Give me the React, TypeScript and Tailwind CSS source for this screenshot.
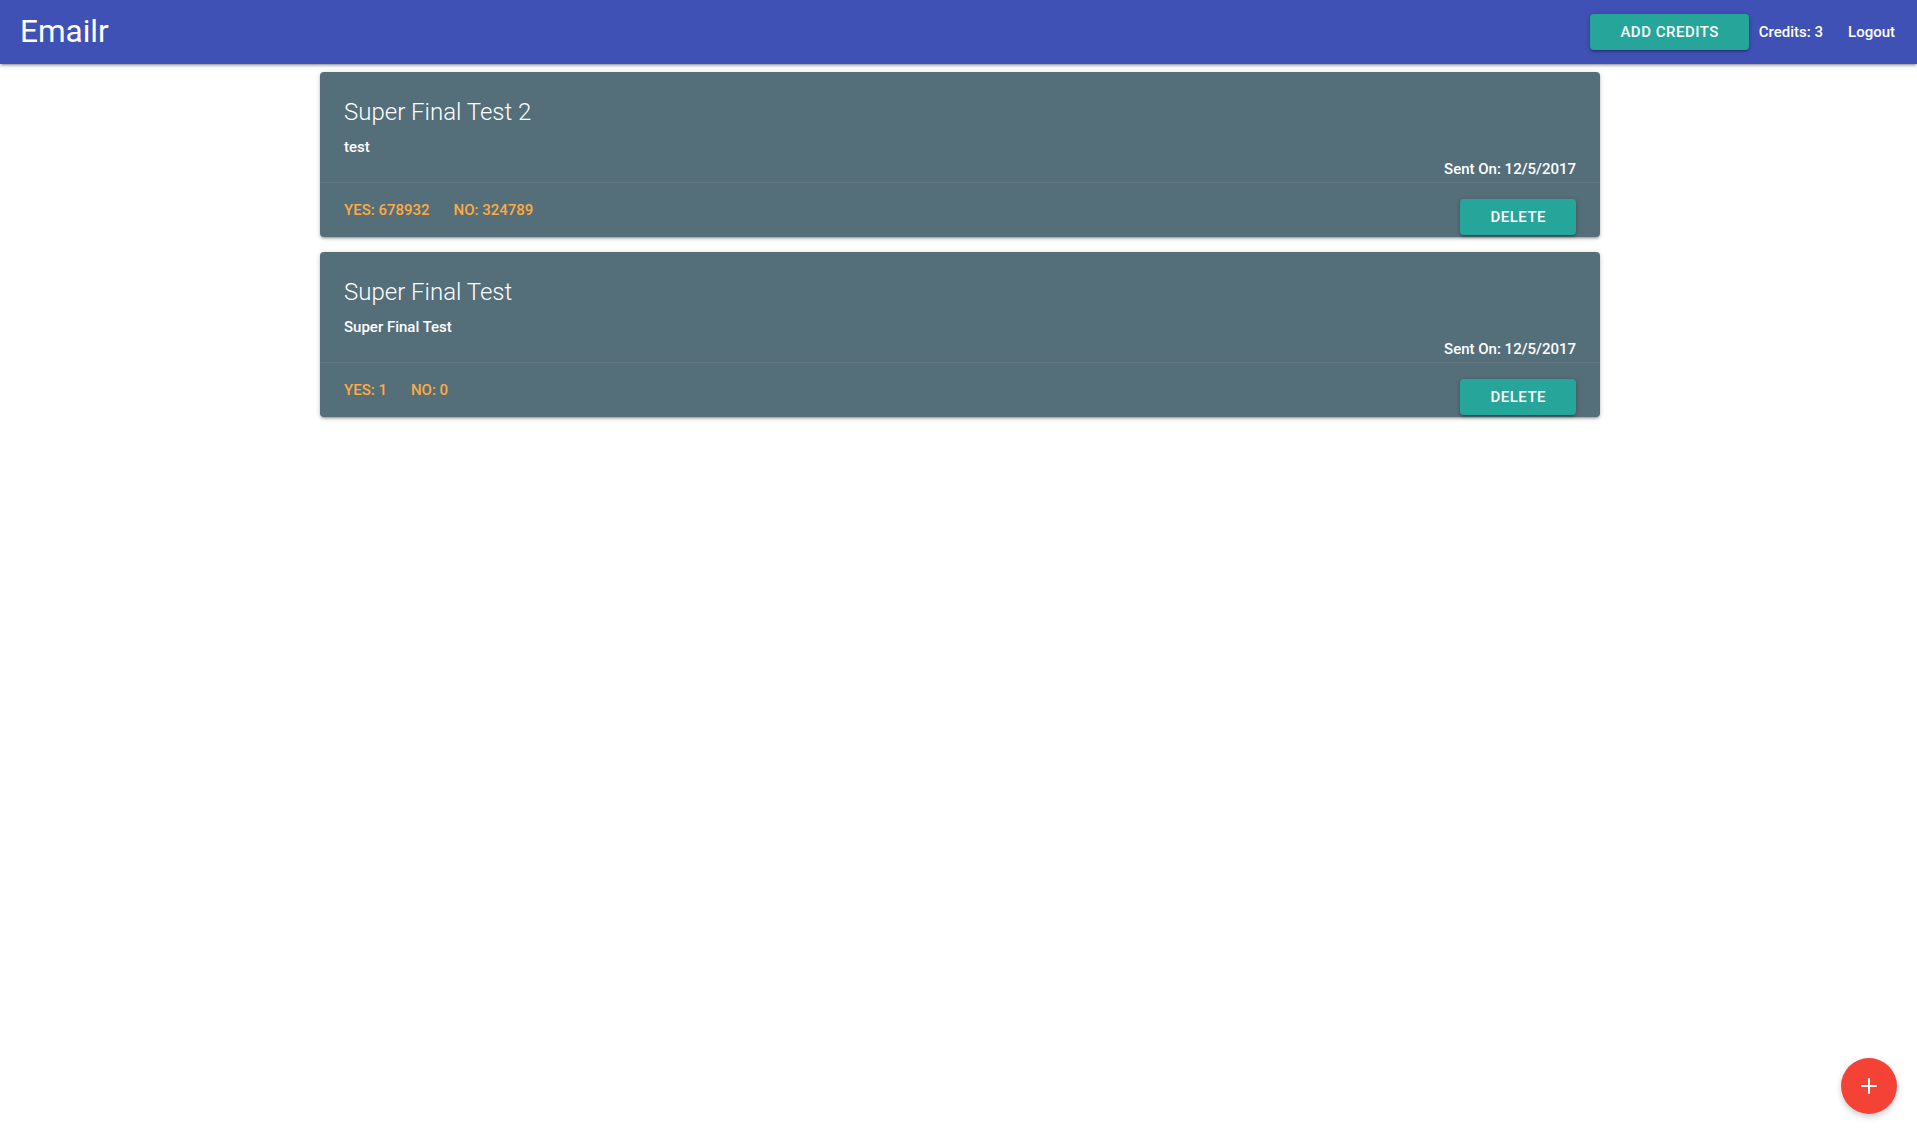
import { Plus } from 'lucide-react';

type Survey = {
    title: string;
    body: string;
    sent: string;
    yes: number;
    no: number;
};

const surveys: Survey[] = [
    { title: 'Super Final Test 2', body: 'test', sent: '12/5/2017', yes: 678932, no: 324789 },
    { title: 'Super Final Test', body: 'Super Final Test', sent: '12/5/2017', yes: 1, no: 0 },
];

const shadow = 'shadow-[0_2px_2px_0_rgba(0,0,0,0.14),0_3px_1px_-2px_rgba(0,0,0,0.12),0_1px_5px_0_rgba(0,0,0,0.2)]';

function Header() {
    return (
        <nav className={`h-16 bg-[#3f51b5] flex items-center justify-between pl-5 pr-[22px] text-white ${shadow} relative z-10`}>
            <a className="text-[31.5px] leading-[64px] font-normal">Emailr</a>
            <div className="flex items-center text-[15px] font-medium">
                <button className={`h-9 px-[30px] rounded-sm bg-[#26a69a] uppercase tracking-[0.5px] ${shadow}`}>
                    Add Credits
                </button>
                <span className="ml-[10px]">Credits: 3</span>
                <a className="ml-[25px]">Logout</a>
            </div>
        </nav>
    );
}

function SurveyCard({ survey }: { survey: Survey }) {
    return (
        <div className={`bg-[#546e7a] text-white rounded-sm mb-[15px] ${shadow}`}>
            <div className="h-[110px] px-6 pt-6">
                <span className="block text-2xl font-light leading-8 mb-2">{survey.title}</span>
                <p className="text-[15px] leading-[22px] font-medium">{survey.body}</p>
                <p className="text-[15px] leading-[22px] font-medium text-right">Sent On: {survey.sent}</p>
            </div>
            <div className="border-t border-[rgba(160,160,160,0.2)] px-6 h-[55px] flex items-start justify-between">
                <div className="pt-4 flex gap-6 text-[15px] leading-[22px] font-medium text-[#ffab40] uppercase">
                    <a>Yes: {survey.yes}</a>
                    <a>No: {survey.no}</a>
                </div>
                <button className={`mt-4 h-9 px-[30px] rounded-sm bg-[#26a69a] text-[15px] font-medium uppercase tracking-[0.5px] ${shadow}`}>
                    Delete
                </button>
            </div>
        </div>
    );
}

export default function App() {
    return (
        <div className="min-h-screen bg-white" style={{ fontFamily: 'Roboto, "Liberation Sans", sans-serif' }}>
            <Header />
            <div className="w-[1280px] ml-[320px] pt-2">
                {surveys.map((s) => (
                    <SurveyCard key={s.title} survey={s} />
                ))}
            </div>
            <button className="fixed right-5 bottom-[21px] w-14 h-14 rounded-full bg-[#f44336] text-white flex items-center justify-center shadow-[0_3px_6px_rgba(0,0,0,0.2)]">
                <Plus className="w-6 h-6" strokeWidth={2} />
            </button>
        </div>
    );
}
